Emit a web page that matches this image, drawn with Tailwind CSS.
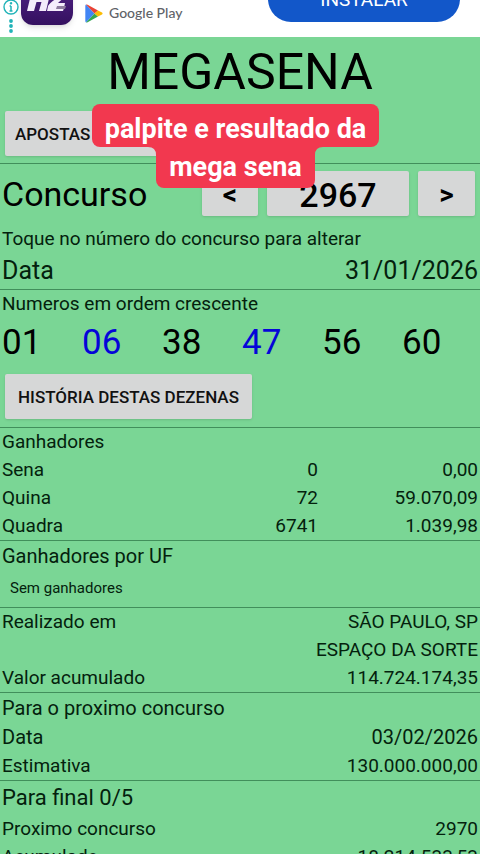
<!DOCTYPE html>
<html lang="pt-BR">
<head>
<meta charset="utf-8">
<meta name="viewport" content="width=device-width, initial-scale=1">
<title>Megasena</title>
<script src="https://cdn.jsdelivr.net/npm/@tailwindcss/browser@4"></script>
</head>
<body class="relative h-screen overflow-hidden bg-[#7ad695] font-['Roboto',sans-serif] text-[19px] leading-[28px] text-[#04210d]">

<header class="flex h-[37px] items-end overflow-hidden bg-white pr-5">
  <div class="flex h-14 w-[21px] flex-col items-center justify-end gap-1 pb-1">
    <svg class="h-4 w-4 shrink-0" viewBox="0 0 16 16" fill="none" stroke="#21b3b8" stroke-width="1.4"><circle cx="8" cy="8" r="7"/><path d="M8 7v5M6.600 7H8M6.500 12h3" stroke-width="1.500"/><circle cx="8" cy="4.300" r=".6" fill="#21b3b8"/></svg>
    <svg class="h-[14px] w-2 shrink-0" viewBox="0 0 8 14" fill="#21b3b8"><circle cx="4" cy="2" r="1.900"/><circle cx="4" cy="7" r="1.900"/><circle cx="4" cy="12" r="1.900"/></svg>
  </div>
  <div class="mb-3 flex h-[53px] w-[52px] items-end justify-center rounded-xl bg-linear-to-b from-[#5b2a94] to-[#34105f] pb-[13px] shadow-md">
    <svg class="h-7 w-11" viewBox="0 0 44 28" fill="#f4ecfb"><path d="M8 2h7l-2.500 11h5L20 2h7l-6 25h-7l2.500-9h-5L9 27H2Z"/><path d="M26 9c2-9 18-8 16 0-1 4-6 7-9 10h7l-1 5-1 3H22l1-5c3-5 11-8 12-12 0-3-2-2-3-1Z"/><path d="M32 22h9l-1 3h-9Z" fill="#8d7b9e"/></svg>
  </div>
  <div class="mb-[14px] ml-3 flex h-5 items-center gap-[6px]">
    <svg class="h-[19px] w-[18px]" viewBox="0 0 18 19"><path d="M1 .6 9.500 9.500 1 18.400Q.3 18 .3 17V2Q.3 1 1 .6Z" fill="#4285f4"/><path d="M1 .6Q1.700.2 2.600.7L13 6.400 9.500 9.500Z" fill="#ea4335"/><path d="M1 18.400Q1.700 18.800 2.600 18.300L13 12.600 9.500 9.500Z" fill="#34a853"/><path d="M13 6.400 17 8.600Q18.200 9.500 17 10.400L13 12.600 9.500 9.500Z" fill="#fbbc04"/></svg>
    <span class="font-['Lato',sans-serif] text-[14px] font-medium text-[#5f6368]">Google Play</span>
  </div>
  <button class="mb-[15px] ml-auto h-[46px] w-48 rounded-full bg-[#1257c9] pt-px text-[19px] leading-[46px] text-white">INSTALAR</button>
</header>

<main>
  <section class="pt-2 pb-[7px]">
    <h1 class="mb-3 text-center text-[50px] leading-[54px] text-black">MEGASENA</h1>
    <button class="ml-[5px] h-[45px] w-[190px] rounded-xs bg-[#d6d7d7] px-[10px] text-left text-[17px] font-medium text-[#111] shadow-sm">APOSTAS</button>
  </section>

  <section class="border-t border-[#418f5b]">
    <div class="flex items-center gap-[9px] pt-[7px] pr-[5px] pb-[9px] pl-[2px] text-black">
      <h2 class="flex-1 pt-[2px] text-[34px] leading-[43px]">Concurso</h2>
      <button aria-label="Concurso anterior" class="h-[45px] w-14 rounded-xs bg-[#d6d7d7] pt-[2px] text-[28px] font-bold shadow-sm">&lt;</button>
      <button class="h-[45px] w-[142px] rounded-xs bg-[#d6d7d7] pt-[2px] text-[34px] font-medium shadow-sm">2967</button>
      <button aria-label="Próximo concurso" class="h-[45px] w-[57px] rounded-xs bg-[#d6d7d7] pt-[2px] text-[28px] font-bold shadow-sm">&gt;</button>
    </div>
    <p class="px-[2px]">Toque no número do concurso para alterar</p>
    <div class="flex justify-between px-[2px] text-[25px] leading-[36px]"><span>Data</span><span>31/01/2026</span></div>
  </section>

  <section class="border-t border-[#418f5b] pb-2">
    <p class="px-[2px]">Numeros em ordem crescente</p>
    <ol class="mb-[6px] grid grid-cols-6 text-[35px] leading-[50px] text-black">
      <li class="pl-[2px]">01</li><li class="pl-[2px] text-[#0505d8]">06</li><li class="pl-[2px]">38</li><li class="pl-[2px] text-[#0505d8]">47</li><li class="pl-[2px]">56</li><li class="pl-[2px]">60</li>
    </ol>
    <button class="ml-[5px] block h-[45px] min-w-[247px] rounded-xs bg-[#d6d7d7] px-[10px] text-[17px] font-medium text-[#111] shadow-sm">HISTÓRIA DESTAS DEZENAS</button>
  </section>

  <section class="border-t border-[#418f5b]">
    <table class="w-full table-fixed">
      <caption class="px-[2px] text-left">Ganhadores</caption>
      <tbody>
        <tr><th scope="row" class="px-[2px] text-left font-normal">Sena</th><td class="px-[2px] text-right">0</td><td class="px-[2px] text-right">0,00</td></tr>
        <tr><th scope="row" class="px-[2px] text-left font-normal">Quina</th><td class="px-[2px] text-right">72</td><td class="px-[2px] text-right">59.070,09</td></tr>
        <tr><th scope="row" class="px-[2px] text-left font-normal">Quadra</th><td class="px-[2px] text-right">6741</td><td class="px-[2px] text-right">1.039,98</td></tr>
      </tbody>
    </table>
  </section>

  <section class="border-t border-[#418f5b]">
    <h2 class="px-[2px] text-[20px] leading-[30px]">Ganhadores por UF</h2>
    <p class="px-[10px] pb-[2px] text-[15px] leading-[34px]">Sem ganhadores</p>
  </section>

  <section class="border-t border-[#418f5b] px-[2px]">
    <div class="flex justify-between"><span>Realizado em</span><span>SÃO PAULO, SP</span></div>
    <div class="text-right">ESPAÇO DA SORTE</div>
    <div class="flex justify-between"><span>Valor acumulado</span><span>114.724.174,35</span></div>
  </section>

  <section class="border-t border-[#418f5b] px-[2px]">
    <h2 class="text-[20px] leading-[30px]">Para o proximo concurso</h2>
    <div class="flex justify-between text-[20px] leading-[29px]"><span>Data</span><span>03/02/2026</span></div>
    <div class="flex justify-between"><span>Estimativa</span><span>130.000.000,00</span></div>
  </section>

  <section class="border-t border-[#418f5b] px-[2px]">
    <h2 class="text-[22px] leading-[34px]">Para final 0/5</h2>
    <div class="flex justify-between"><span>Proximo concurso</span><span>2970</span></div>
    <div class="flex justify-between"><span>Acumulado</span><span>18.214.533,53</span></div>
  </section>
</main>

<div class="absolute inset-x-0 top-[104px] flex flex-col items-center pr-[9px] text-[27px] font-bold text-white">
  <div class="rounded-lg bg-[#f2384f] px-[13px] pt-[9px] pb-[2px] leading-[32px]">palpite e resultado da</div>
  <div class="flex items-start">
    <svg class="h-2 w-2" viewBox="0 0 8 8" fill="#f2384f"><path d="M0 0H8V8Q8 0 0 0Z"/></svg>
    <div class="-mt-px rounded-b-lg bg-[#f2384f] px-[13px] pt-[5px] pb-[5px] leading-[32px]">mega sena</div>
    <svg class="h-2 w-2" viewBox="0 0 8 8" fill="#f2384f"><path d="M8 0H0V8Q0 0 8 0Z"/></svg>
  </div>
</div>
</body>
</html>
